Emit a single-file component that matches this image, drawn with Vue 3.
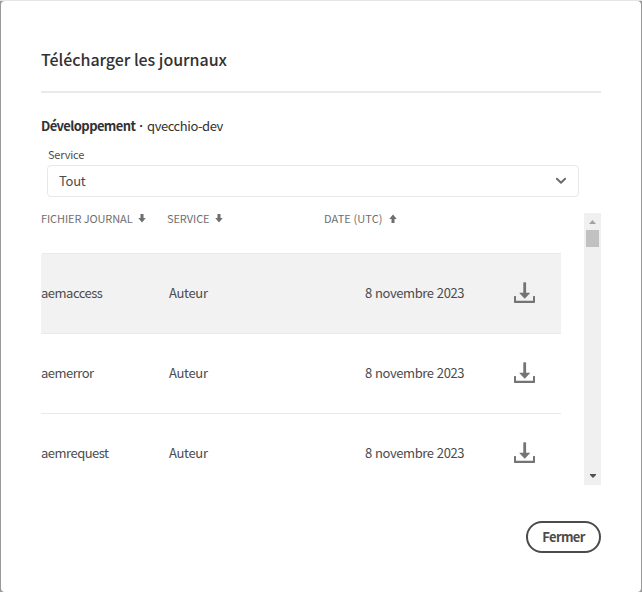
<script setup>
const columns = [
  { key: 'file', label: 'FICHIER JOURNAL', dir: 'down' },
  { key: 'service', label: 'SERVICE', dir: 'down' },
  { key: 'date', label: 'DATE (UTC)', dir: 'up' },
]
const logs = [
  { name: 'aemaccess', service: 'Auteur', date: '8 novembre 2023', active: true },
  { name: 'aemerror', service: 'Auteur', date: '8 novembre 2023', active: false },
  { name: 'aemrequest', service: 'Auteur', date: '8 novembre 2023', active: false },
]
</script>

<template>
  <div class="backdrop">
    <section class="dialog" role="dialog">
      <h1 class="title">Télécharger les journaux</h1>
      <hr class="divider" />
      <p class="environment"><strong>Développement</strong><span class="dot">·</span><span class="program">qvecchio-dev</span></p>
      <label class="field-label">Service</label>
      <button class="picker" type="button">
        <span>Tout</span>
        <svg class="chevron" width="12" height="8" viewBox="0 0 12 8"><path d="M1.9 1.8 6 5.7l4.1-3.9" fill="none" stroke="#6e6e6e" stroke-width="2" stroke-linecap="round" stroke-linejoin="round" /></svg>
      </button>
      <div class="log-area">
        <div class="table">
          <div class="head">
            <div v-for="c in columns" :key="c.key" class="head-cell" :class="c.key">
              <span class="head-text">{{ c.label }}</span>
              <svg class="sort" :class="c.dir" width="8" height="9" viewBox="0 0 8 9"><path d="M2.5 0h3v4h2.2L4 8.4.3 4h2.2z" fill="#6e6e6e" /></svg>
            </div>
          </div>
          <div v-for="l in logs" :key="l.name" class="row" :class="{ active: l.active }">
            <span class="name">{{ l.name }}</span>
            <span>{{ l.service }}</span>
            <span class="day">{{ l.date }}</span>
            <svg class="download" width="22" height="22" viewBox="0 0 22 22"><path d="M9.3 1Q9.3.3 10 .3h1.4q.7 0 .7.7v9.7h3.6q.7 0 .2.6l-4.7 5q-.5.5-1 0l-4.7-5q-.5-.6.2-.6h3.6zM0 14.5q0-.5.5-.5h1q.5 0 .5.5V18.8h17v-4.3q0-.5.5-.5h1q.5 0 .5.5v5.8q0 .6-.6.6H.6q-.6 0-.6-.6z" fill="#747474" /></svg>
          </div>
        </div>
        <div class="scrollbar">
          <svg width="7" height="4" viewBox="0 0 7 4"><path d="M0 4 3.5 0 7 4z" fill="#a3a3a3" /></svg>
          <i class="thumb"></i>
          <svg class="arrow-end" width="6" height="4" viewBox="0 0 6 4"><path d="M0 0h6v1L3 4 0 1z" fill="#505050" /></svg>
        </div>
      </div>
      <footer><button class="close" type="button">Fermer</button></footer>
    </section>
  </div>
</template>

<style>
body { margin: 0; overflow: hidden; }
</style>

<style scoped>
* { box-sizing: border-box; }
.backdrop {
  width: 642px; height: 592px; padding: 1px 1px 0;
  background: linear-gradient(#e4e4e4 1px, #999 1px);
  font: 13px/20px "Noto Sans CJK SC", "Noto Sans", sans-serif;
  color: #4b4b4b; white-space: nowrap; letter-spacing: -0.32px;
}
.dialog { height: 591px; padding: 0 40px; background: #fff; border-radius: 4px; display: flex; flex-direction: column; }
.title { margin: 46px 0 0; height: 24px; font-size: 16px; line-height: 24px; font-weight: 500; letter-spacing: -0.04px; color: #323232; }
.divider { width: 560px; height: 2px; margin: 20px 0 0; border: 0; background: #eaeaea; flex: none; }
.environment { margin: 23px 0 0; height: 20px; display: flex; color: #323232; letter-spacing: -0.42px; }
.environment strong { font-weight: 700; width: 95px; letter-spacing: -0.6px; }
.dot { width: 11px; text-align: center; font-family: "Liberation Sans", sans-serif; font-weight: 700; letter-spacing: 0; }
.field-label { margin: 10px 0 0 7px; height: 16px; font-size: 11px; line-height: 16px; letter-spacing: -0.2px; }
.picker {
  margin: 3px 0 0 6px; width: 532px; height: 32px; padding: 0 11px; flex: none;
  display: flex; align-items: center; justify-content: space-between;
  border: 1px solid #e8e8e8; border-radius: 4px; background: #fff; font: inherit; color: inherit; letter-spacing: -0.25px;
}
.log-area { display: flex; justify-content: space-between; height: 272px; margin-top: 16px; flex: none; }
.table { width: 520px; }
.head { height: 40px; display: grid; grid-template-columns: 126px 157px 1fr; color: #6e6e6e; font-size: 11px; line-height: 12px; letter-spacing: -0.1px; }
.head-cell { display: flex; gap: 6px; }
.file { gap: 5px; }
.head-text { margin-top: -1px; }
.date .head-text { letter-spacing: 0.1px; }
.sort { margin-top: 1px; }
.sort.up { transform: scaleY(-1); }
.row { height: 80px; padding-bottom: 1px; display: grid; grid-template-columns: 128px 196px 149px 22px; align-items: center; border-top: 1px solid #eaeaea; }
.name { letter-spacing: -0.5px; }
.day { letter-spacing: -0.42px; word-spacing: 0.8px; }
.row.active { background: #f2f2f2; border-radius: 3px 0 0 0; }
.scrollbar { width: 17px; background: #f0f0f0; display: flex; flex-direction: column; align-items: center; padding: 7px 0; }
.thumb { width: 13px; height: 17px; margin-top: 6px; background: #c1c1c1; }
.arrow-end { margin-top: auto; }
footer { display: flex; justify-content: flex-end; margin-top: 36px; }
.close { width: 75px; height: 32px; border: 2px solid #4b4b4b; border-radius: 16px; background: #fff; font: inherit; font-weight: 700; letter-spacing: -0.65px; color: #4b4b4b; padding: 0 0 1px; }
</style>
